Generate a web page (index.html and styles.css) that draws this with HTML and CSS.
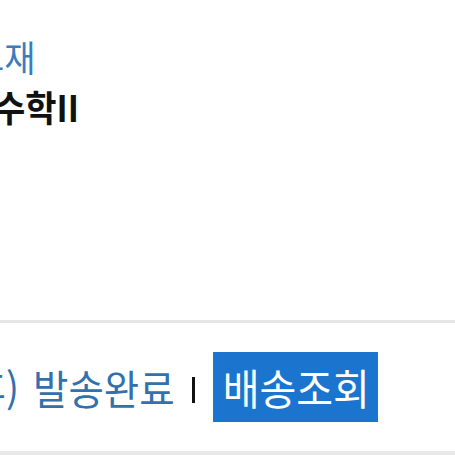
FILE: index.html
```html
<!DOCTYPE html>
<html lang="ko">
<head>
<meta charset="utf-8">
<link rel="stylesheet" href="styles.css">
</head>
<body>
<div class="page">
  <section class="info">
    <div class="category">교재</div>
    <div class="title">수학II</div>
  </section>
  <div class="divider"></div>
  <section class="status-row">
    <span class="carrier-wrap"><span class="carrier">(택배 선불 후)</span></span>
    <span class="status">발송완료</span>
    <span class="bar"></span>
    <span class="track-btn"><span class="btn-label">배송조회</span></span>
  </section>
  <div class="divider bottom"></div>
</div>
</body>
</html>
```

FILE: styles.css
```css
html, body {
  margin: 0;
  padding: 0;
  background: #ffffff;
}
body {
  width: 455px;
  height: 455px;
  overflow: hidden;
  font-family: "Noto Sans CJK KR", "Noto Sans", sans-serif;
}
.page {
  display: flex;
  flex-direction: column;
}
.info {
  height: 320px;
  padding-top: 37px;
  box-sizing: border-box;
}
.category {
  margin-left: -27px;
  font-size: 34px;
  line-height: 40px;
  color: #3b7cbf;
  white-space: nowrap;
  transform: scaleY(1.06);
  transform-origin: left center;
}
.title {
  margin-top: 10px;
  margin-left: -6px;
  font-size: 34px;
  line-height: 40px;
  font-weight: 700;
  color: #111111;
  white-space: nowrap;
  transform: scaleY(1.08);
  transform-origin: left center;
}
.divider {
  height: 3px;
  background: #e6e6e6;
}
.divider.bottom {
  height: 4px;
  background: #e9e9e9;
}
.status-row {
  height: 128px;
  display: flex;
  align-items: center;
}
.carrier-wrap {
  width: 33px;
  display: flex;
  justify-content: flex-end;
  flex-shrink: 0;
}
.carrier, .status {
  flex-shrink: 0;
  white-space: nowrap;
  font-size: 38.5px;
  line-height: 44px;
  color: #3270ae;
  transform: scaleY(1.06);
}
.carrier {
  margin-right: 14px;
}
.bar {
  width: 3px;
  height: 26px;
  background: #111111;
  margin: 6px 18px 0 17px;
  flex-shrink: 0;
}
.track-btn {
  flex-shrink: 0;
  width: 165px;
  height: 70px;
  box-sizing: border-box;
  padding-left: 10px;
  display: flex;
  align-items: center;
  background: #1b75cf;
  color: #ffffff;
  font-size: 40px;
  white-space: nowrap;
}
.btn-label {
  transform: scaleY(1.06);
}
```
